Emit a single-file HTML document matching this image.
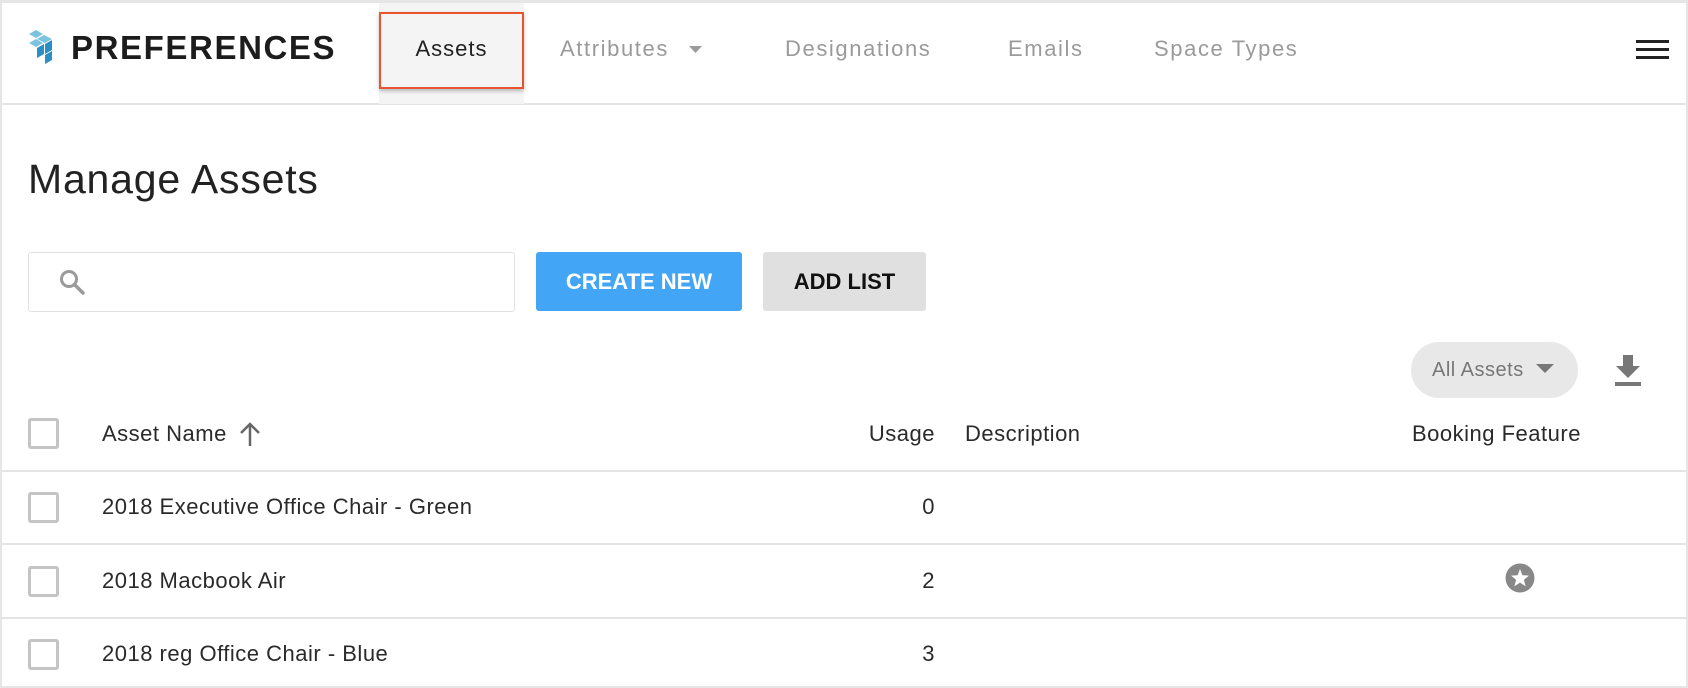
<!DOCTYPE html>
<html><head><meta charset="utf-8"><style>
*{margin:0;padding:0;box-sizing:border-box}
body{width:1688px;height:688px;background:#fff;font-family:"Liberation Sans",sans-serif;position:relative;overflow:hidden;color:#222}
.frame{position:absolute;left:0;top:0;width:1688px;height:688px;border:2px solid #e6e6e6;border-top-width:3px}
.a{position:absolute;white-space:nowrap}
.hdr{position:absolute;left:0;top:0;width:1688px;height:105px;border-bottom:2px solid #e4e4e4}
.nav{position:absolute;top:35px;font-size:22px;color:#9a9a9a;line-height:28px;letter-spacing:1.6px}
.cb{position:absolute;left:28px;width:31px;height:31px;border:3px solid #c4c4c4;border-radius:3px}
.row{position:absolute;left:2px;width:1684px;border-top:2px solid #e4e4e4}
.t{position:absolute;font-size:22px;color:#2a2a2a;line-height:28px;letter-spacing:0.5px}
</style></head><body>
<div class="frame"></div>
<div class="hdr"></div>
<div class="a" style="left:379px;top:3px;width:145px;height:101px;background:#f4f4f4"></div>
<div class="a" style="left:379px;top:12px;width:145px;height:77px;background:#f4f4f4;border:2px solid #e8542e;box-shadow:0 2px 4px rgba(0,0,0,.25)"></div>
<div class="a" style="left:379px;top:35px;width:145px;text-align:center;font-size:22px;line-height:28px;color:#222;letter-spacing:1px">Assets</div>
<svg class="a" style="left:28px;top:30px" width="27" height="34" viewBox="0 0 27 34">
<polygon points="1,4 8,0 15,4 8,8" fill="#7cc3e0"/>
<polygon points="1,13 8,9 15,13 8,17" fill="#7cc3e0"/>
<polygon points="9,9 16,5 24,9 17,13" fill="#7cc3e0"/>
<polygon points="9,18 16,14 16,24 9,28" fill="#2a8fc4"/>
<polygon points="17,14 24,10 24,20 17,24" fill="#2a8fc4"/>
<polygon points="17,25 24,21 24,30 17,34" fill="#2a8fc4"/>
</svg>
<div class="a" style="left:71px;top:28px;font-size:33px;font-weight:bold;color:#1c1c1c;line-height:40px;letter-spacing:1.6px">PREFERENCES</div>
<div class="nav" style="left:560px">Attributes</div>
<svg class="a" style="left:689px;top:46px" width="13" height="8"><polygon points="0,0 13,0 6.5,7" fill="#9a9a9a"/></svg>
<div class="nav" style="left:785px">Designations</div>
<div class="nav" style="left:1008px">Emails</div>
<div class="nav" style="left:1154px">Space Types</div>
<div class="a" style="left:1636px;top:40px;width:33px;height:3px;background:#222"></div>
<div class="a" style="left:1636px;top:48px;width:33px;height:3px;background:#222"></div>
<div class="a" style="left:1636px;top:56px;width:33px;height:3px;background:#222"></div>

<div class="a" style="left:28px;top:154px;font-size:41px;color:#222;line-height:50px;letter-spacing:0.8px">Manage Assets</div>

<div class="a" style="left:28px;top:252px;width:487px;height:60px;border:1px solid #e2e2e2;border-radius:3px"></div>
<svg class="a" style="left:59px;top:269px" width="28" height="28" viewBox="0 0 28 28"><circle cx="10" cy="10" r="7.5" fill="none" stroke="#9a9a9a" stroke-width="3"/><line x1="15.5" y1="15.5" x2="24" y2="24" stroke="#9a9a9a" stroke-width="3.5" stroke-linecap="round"/></svg>
<div class="a" style="left:536px;top:252px;width:206px;height:59px;background:#42a5f5;border-radius:3px;color:#fff;font-size:22px;font-weight:bold;text-align:center;line-height:59px">CREATE NEW</div>
<div class="a" style="left:763px;top:252px;width:163px;height:59px;background:#e0e0e0;border-radius:3px;color:#111;font-size:22px;font-weight:bold;text-align:center;line-height:59px">ADD LIST</div>

<div class="a" style="left:1411px;top:342px;width:167px;height:56px;background:#e8e8e8;border-radius:28px"></div>
<div class="a" style="left:1432px;top:356px;font-size:20px;color:#777;line-height:28px;letter-spacing:0.5px">All Assets</div>
<svg class="a" style="left:1536px;top:364px" width="18" height="10"><polygon points="0,0 18,0 9,9" fill="#777"/></svg>
<svg class="a" style="left:1614px;top:355px" width="28" height="33" viewBox="0 0 28 33"><polygon points="9,0 19,0 19,11 26,11 14,23 2,11 9,11" fill="#777"/><rect x="1" y="27" width="26" height="4" fill="#777"/></svg>

<div class="cb" style="top:418px"></div>
<div class="t" style="left:102px;top:420px">Asset Name</div>
<svg class="a" style="left:238px;top:421px" width="24" height="26" viewBox="0 0 24 26"><line x1="12" y1="3" x2="12" y2="25" stroke="#666" stroke-width="2.5"/><polyline points="3,12 12,3 21,12" fill="none" stroke="#666" stroke-width="2.5"/></svg>
<div class="t" style="left:835px;top:420px;width:100px;text-align:right">Usage</div>
<div class="t" style="left:965px;top:420px">Description</div>
<div class="t" style="left:1412px;top:420px">Booking Feature</div>

<div class="row" style="top:470px"></div>
<div class="cb" style="top:492px"></div>
<div class="t" style="left:102px;top:493px">2018 Executive Office Chair - Green</div>
<div class="t" style="left:835px;top:493px;width:100px;text-align:right">0</div>

<div class="row" style="top:543px"></div>
<div class="cb" style="top:566px"></div>
<div class="t" style="left:102px;top:567px">2018 Macbook Air</div>
<div class="t" style="left:835px;top:567px;width:100px;text-align:right">2</div>
<svg class="a" style="left:1505px;top:563px" width="30" height="30" viewBox="0 0 30 30"><circle cx="15" cy="15" r="14.5" fill="#888"/><polygon points="15,6 17.4,12.2 24,12.6 18.9,16.8 20.6,23.2 15,19.6 9.4,23.2 11.1,16.8 6,12.6 12.6,12.2" fill="#fff"/></svg>

<div class="row" style="top:617px"></div>
<div class="cb" style="top:639px"></div>
<div class="t" style="left:102px;top:640px">2018 reg Office Chair - Blue</div>
<div class="t" style="left:835px;top:640px;width:100px;text-align:right">3</div>
</body></html>
